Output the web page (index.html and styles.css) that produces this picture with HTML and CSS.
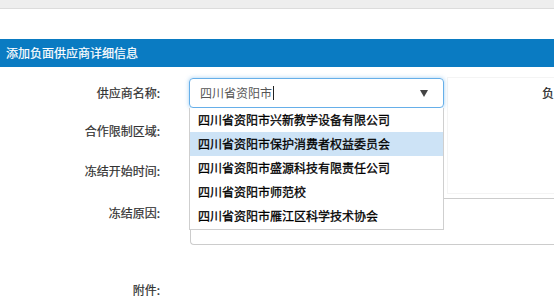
FILE: index.html
```html
<html>
	<head>
	<meta charset="utf-8" />
	<meta name="viewport" content="width=device-width, initial-scale=1"/>
	<link rel="stylesheet" href="styles.css">
	</head>

	<body>
	<div class="topbar"></div>

	<div class="panel">
		<div class="panel-title">添加负面供应商详细信息</div>

		<form class="form">
			<div class="form-top">
				<div class="col-main">
					<div class="form-row">
						<label class="form-label">供应商名称:</label>
						<div class="combo">
							<div class="combo-input">四川省资阳市<span class="cursor"></span><span class="arrow"></span></div>
							<ul class="combo-list">
								<li>四川省资阳市兴新教学设备有限公司</li>
								<li class="active">四川省资阳市保护消费者权益委员会</li>
								<li>四川省资阳市盛源科技有限责任公司</li>
								<li>四川省资阳市师范校</li>
								<li>四川省资阳市雁江区科学技术协会</li>
							</ul>
						</div>
					</div>
					<div class="form-row row-2">
						<label class="form-label">合作限制区域:</label>
						<div class="field"></div>
					</div>
					<div class="form-row row-3">
						<label class="form-label">冻结开始时间:</label>
						<div class="field"></div>
					</div>
				</div>
				<div class="col-side">
					<span class="side-label">负</span>
				</div>
			</div>

			<div class="form-row row-4">
				<label class="form-label">冻结原因:</label>
				<div class="textarea"></div>
			</div>

			<div class="form-row row-5">
				<label class="form-label">附件:</label>
			</div>
		</form>
	</div>
	</body>
</html>
```

FILE: styles.css
```css
body {margin:0; background:#fff; font-family:"Noto Sans CJK SC", "Noto Sans", sans-serif; font-size:12px; color:#333; overflow:hidden;}

.topbar {height:8px; background:#eeeeee; border-bottom:1px solid #dcdcdc;}

.panel {margin-top:30px;}
.panel-title {height:28px; line-height:27px; background:#0a7bc2; color:#fff; padding-left:6px; font-size:12px; -webkit-text-stroke:0.2px #fff;}

.form {padding-top:11px;}
.form-top {display:flex;}
.col-main {width:444px; flex:none;}
.col-side {
	flex:1;
	margin-top:-1px;
	margin-left:3px;
	height:115px;
	border:1px solid #f4f4f4;
	border-right:none;
	padding-left:94px;
	line-height:30px;
	white-space:nowrap;
	overflow:hidden;
	color:#222;
	-webkit-text-stroke:0.2px #222;
}

.form-row {display:flex; height:30px;}
.row-2 {margin-top:8px;}
.row-3 {margin-top:10px;}
.row-4 {margin-top:4px; height:47px;}
.row-5 {margin-top:30px;}

.form-label {width:160px; flex:none; text-align:right; line-height:30px; color:#333; -webkit-text-stroke:0.2px #333; margin-right:29px;}

.combo {position:relative; width:255px;}
.combo-input {
	box-sizing:border-box;
	height:30px;
	border:1px solid #66afe9;
	border-radius:4px;
	box-shadow:0 0 4px rgba(102,175,233,.6);
	padding-left:10px;
	line-height:28px;
	color:#555;
	display:flex;
	align-items:center;
}
.cursor {display:inline-block; width:1px; height:14px; background:#222; margin-left:1px;}
.arrow {margin-left:auto; margin-right:15px; width:0; height:0; border-left:4px solid transparent; border-right:4px solid transparent; border-top:7px solid #444;}

.combo-list {
	position:absolute;
	top:30px;
	left:0;
	width:253px;
	margin:0;
	padding:0 0 1px 0;
	list-style:none;
	background:#fff;
	border:1px solid #cfcfcf;
	border-top:none;
	z-index:10;
}
.combo-list li {height:24px; line-height:24px; padding-left:8px; color:#000; -webkit-text-stroke:0.3px #000;}
.combo-list li.active {background:#cde3f6;}

.field {width:255px; height:30px;}
.textarea {flex:1; border:1px solid #cccccc; border-right:none; border-radius:4px 0 0 4px; margin-left:1px;}
```
